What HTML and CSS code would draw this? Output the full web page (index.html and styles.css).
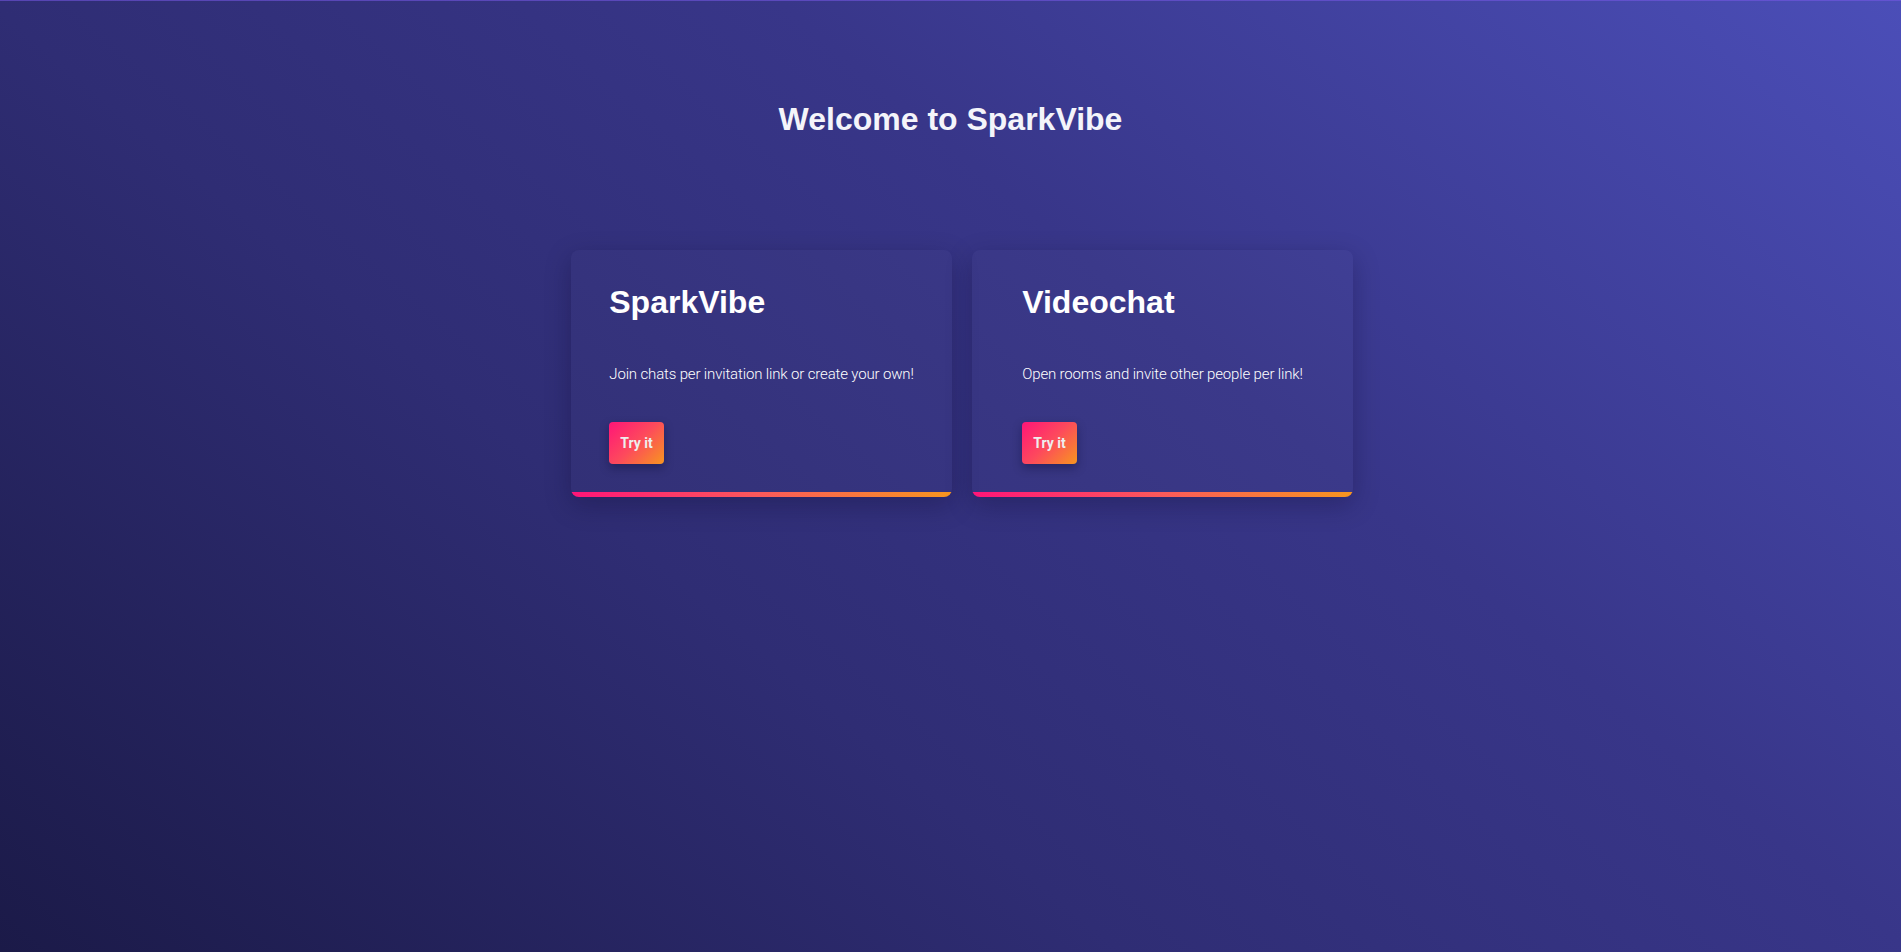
FILE: index.html
```html
<!DOCTYPE html>
<html lang="en">
<head>
<meta charset="utf-8">
<title>SparkVibe</title>
<link rel="stylesheet" href="styles.css">
</head>
<body>
<main class="page">
  <h1 class="title">Welcome to SparkVibe</h1>
  <section class="cards">
    <article class="card">
      <div class="card-inner">
        <h2 class="card-title">SparkVibe</h2>
        <p class="card-text">Join chats per invitation link or create your own!</p>
        <button class="btn">Try it</button>
      </div>
    </article>
    <article class="card">
      <div class="card-inner">
        <h2 class="card-title">Videochat</h2>
        <p class="card-text">Open rooms and invite other people per link!</p>
        <button class="btn">Try it</button>
      </div>
    </article>
  </section>
</main>
</body>
</html>
```

FILE: styles.css
```css
html, body {
  margin: 0;
  padding: 0;
  height: 100%;
}

body {
  background: linear-gradient(40deg, #1b1a48 0%, #2f2d74 37%, #383689 63%, #4b4eb8 100%);
  color: #fff;
  font-family: "Liberation Sans", Arial, sans-serif;
}

.page {
  box-sizing: border-box;
  min-height: 100%;
  border-top: 1px solid rgba(120, 90, 230, 0.55);
  padding-top: 100px;
  display: flex;
  flex-direction: column;
  align-items: center;
}

.title {
  margin: 0;
  font-size: 32px;
  font-weight: 700;
  line-height: 37px;
  color: #f4f4fa;
}

.cards {
  align-self: stretch;
  display: flex;
  justify-content: center;
  gap: 20px;
  padding-left: 23px;
  margin-top: 112px;
}

.card {
  box-sizing: border-box;
  width: 381px;
  height: 247px;
  border-radius: 8px;
  background:
    linear-gradient(90deg, #ff1578 0%, #fb5a5a 50%, #f7961f 100%) left bottom / 100% 5px no-repeat,
    rgba(255, 255, 255, 0.015);
  box-shadow: 0 8px 26px rgba(10, 8, 40, 0.28);
  padding-top: 34px;
  display: flex;
  justify-content: center;
}

.card-inner {
  display: flex;
  flex-direction: column;
  align-items: flex-start;
}

.card-title {
  margin: 0;
  font-size: 32px;
  font-weight: 700;
  line-height: 37px;
  color: #ffffff;
}

.card-text {
  margin: 45px 0 0;
  font-family: Roboto, "Liberation Sans", sans-serif;
  font-weight: 300;
  font-size: 15px;
  letter-spacing: -0.15px;
  line-height: 17px;
  color: #ffffff;
}

.btn {
  margin-top: 39px;
  border: 0;
  border-radius: 4px;
  padding: 13px 11px;
  font-family: Roboto, "Liberation Sans", sans-serif;
  font-weight: 700;
  font-size: 14px;
  line-height: 16px;
  color: #eeeeee;
  background: linear-gradient(135deg, #ff1578 0%, #fd4a5c 50%, #f7961f 100%);
  box-shadow: 0 4px 10px rgba(10, 8, 40, 0.35);
  cursor: pointer;
}
```
